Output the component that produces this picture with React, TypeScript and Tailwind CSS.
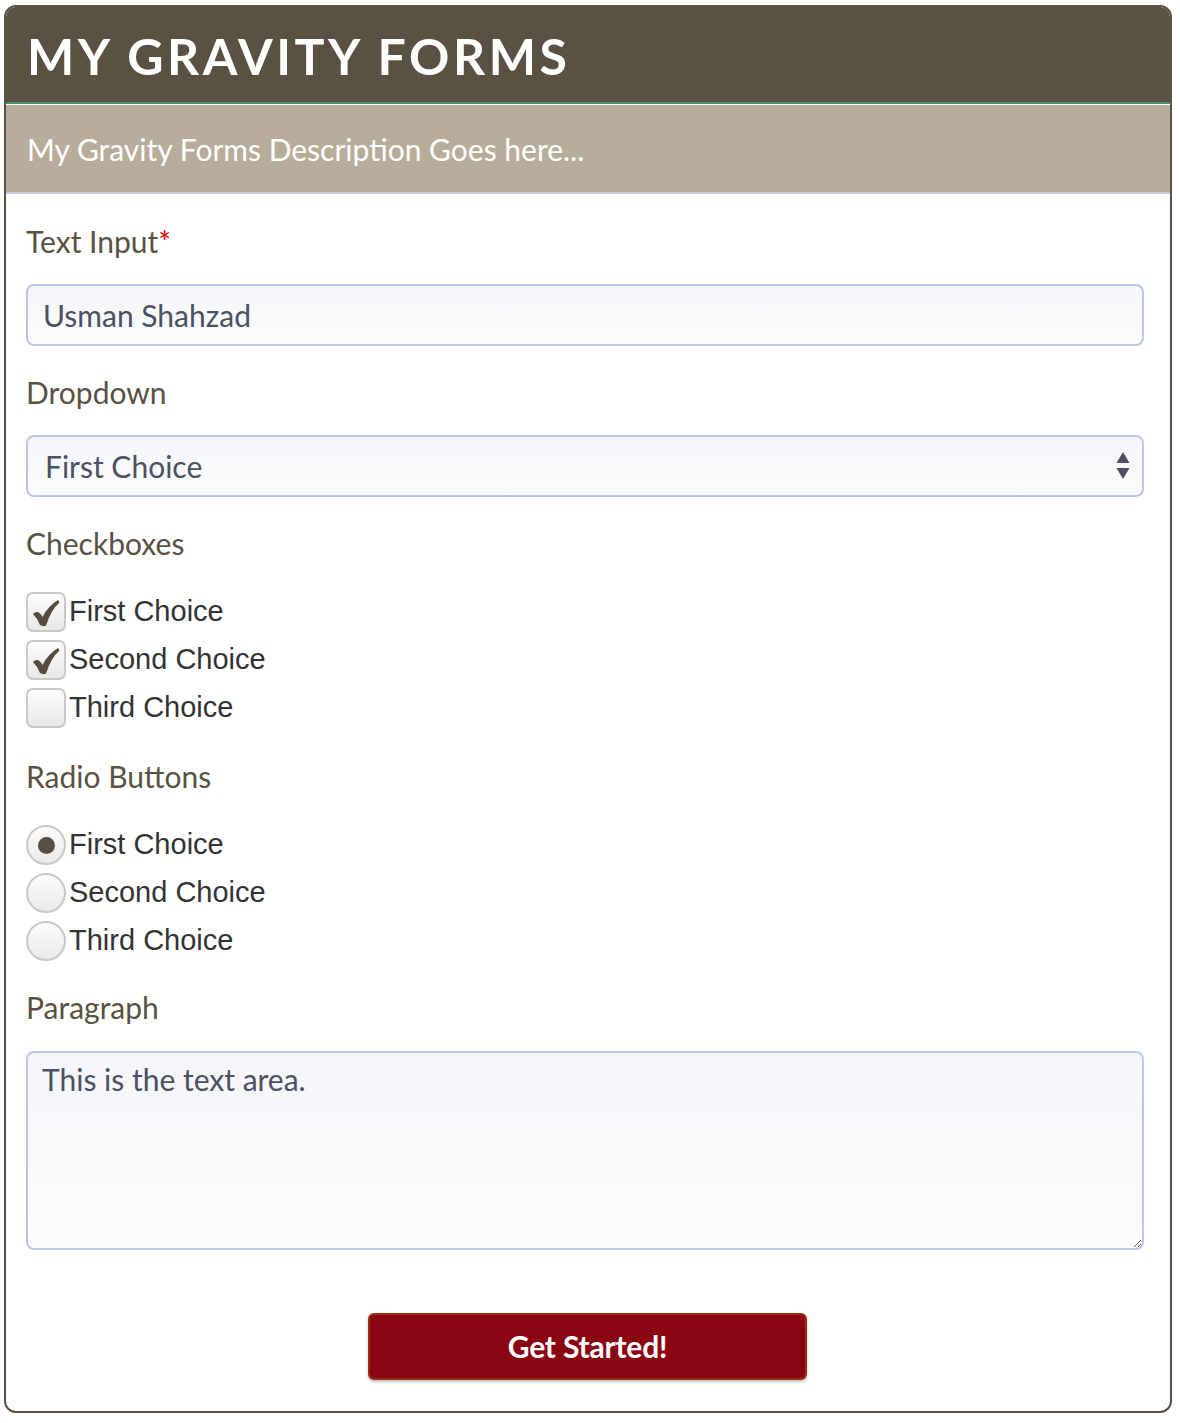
import React from "react";

const lato = "font-['Lato','Noto_Sans',sans-serif]";
const helv = "font-['Liberation_Sans','Arial',sans-serif]";

function FieldLabel({ children, required }: { children: React.ReactNode; required?: boolean }) {
  return (
    <div className={`${lato} text-[30px] leading-[36px] text-[#5a5142]`}>
      {children}
      {required && <span className="text-[#e10000]">*</span>}
    </div>
  );
}

function CheckItem({ label, checked }: { label: string; checked?: boolean }) {
  return (
    <div className="flex items-center h-[40px]">
      <span className="w-[40px] h-[40px] shrink-0 rounded-[7px] border-2 border-[#c9c9c9] bg-gradient-to-b from-[#fbfbfb] to-[#e9e9e9] flex items-center justify-center">
        {checked && (
          <svg width="28" height="28" viewBox="0 0 28 28" className="mt-[2px]">
            <path
              d="M1 15 Q5 11 9 15.5 L10.5 18 Q16 7 26 1 L27.5 3.5 Q19 11 14 26.5 Q11 28 8 26 Q6 20 1 15 Z"
              fill="#544c3d"
            />
          </svg>
        )}
      </span>
      <span className={`${helv} text-[29px] text-[#333] ml-[3px]`}>{label}</span>
    </div>
  );
}

function RadioItem({ label, checked }: { label: string; checked?: boolean }) {
  return (
    <div className="flex items-center h-[40px]">
      <span className="w-[40px] h-[40px] shrink-0 rounded-full border-2 border-[#c9c9c9] bg-gradient-to-b from-[#fbfbfb] to-[#e9e9e9] flex items-center justify-center">
        {checked && <span className="w-[17px] h-[17px] rounded-full bg-[#574f40]" />}
      </span>
      <span className={`${helv} text-[29px] text-[#333] ml-[3px]`}>{label}</span>
    </div>
  );
}

const control =
  "w-full rounded-[8px] border-2 border-[#bcc6e6] bg-gradient-to-b from-[#f5f6f9] to-[#fbfcfd] outline-none text-[#4b5162] text-[30px]";

export default function App() {
  return (
    <div className="min-h-screen bg-white pt-[5px] pl-[4px]">
      <div className="w-[1168px] rounded-[12px] border-2 border-[#5a5142] overflow-hidden bg-white">
        {/* header */}
        <div className="h-[97px] bg-[#5a5142] flex items-center pl-[21px] border-b-2 border-[#47936d]">
          <h1 className={`${lato} font-bold text-[50px] leading-none tracking-[3.5px] text-white mt-[2px]`}>
            MY GRAVITY FORMS
          </h1>
        </div>
        <div className="h-[90px] bg-[#b8ad9a] border-t border-white border-b-2 border-b-[#c6cbdb] flex items-center pl-[21px]">
          <p className={`${lato} text-[30px] tracking-[0px] text-white mt-[2px]`}>
            My Gravity Forms Description Goes here...
          </p>
        </div>

        {/* form body */}
        <div className="pt-[29px] pl-[20px] pr-[26px] pb-[31px]">
          <FieldLabel required>Text Input</FieldLabel>
          <input
            readOnly
            defaultValue="Usman Shahzad"
            className={`${control} ${lato} mt-[25px] h-[62px] px-[15px]`}
          />

          <div className="mt-[28px]">
            <FieldLabel>Dropdown</FieldLabel>
          </div>
          <div className="relative mt-[25px]">
            <select className={`${control} ${lato} appearance-none h-[62px] px-[17px]`} defaultValue="first">
              <option value="first">First Choice</option>
              <option value="second">Second Choice</option>
              <option value="third">Third Choice</option>
            </select>
            <svg
              className="absolute right-[14px] top-[16px] pointer-events-none"
              width="14"
              height="30"
              viewBox="0 0 14 30"
            >
              <path d="M7 1 L13.5 12 L0.5 12 Z" fill="#4b5162" />
              <path d="M0.5 17 L13.5 17 L7 28 Z" fill="#4b5162" />
            </svg>
          </div>

          <div className="mt-[28px]">
            <FieldLabel>Checkboxes</FieldLabel>
          </div>
          <div className="mt-[31px] flex flex-col gap-[8px]">
            <CheckItem label="First Choice" checked />
            <CheckItem label="Second Choice" checked />
            <CheckItem label="Third Choice" />
          </div>

          <div className="mt-[30px]">
            <FieldLabel>Radio Buttons</FieldLabel>
          </div>
          <div className="mt-[31px] flex flex-col gap-[8px]">
            <RadioItem label="First Choice" checked />
            <RadioItem label="Second Choice" />
            <RadioItem label="Third Choice" />
          </div>

          <div className="mt-[28px]">
            <FieldLabel>Paragraph</FieldLabel>
          </div>
          <textarea
            readOnly
            defaultValue="This is the text area."
            className={`${control} ${lato} block mt-[26px] h-[199px] px-[14px] pt-[8px] leading-[36px] resize-y`}
          />

          <div className="flex justify-center mt-[63px] ml-[5px]">
            <button className="w-[439px] h-[67px] rounded-[6px] bg-[#8b0613] border-2 border-[#9b2b12] shadow-[0_2px_3px_rgba(0,0,0,0.25)] flex items-center justify-center">
              <span className={`${lato} font-bold text-[30px] tracking-[-0.2px] text-white`}>Get Started!</span>
            </button>
          </div>
        </div>
      </div>
    </div>
  );
}
